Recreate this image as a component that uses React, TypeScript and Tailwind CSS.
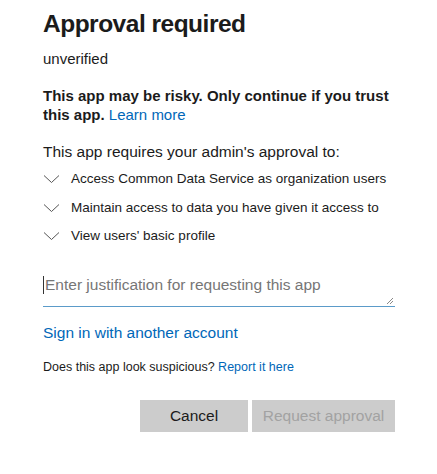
import React from "react";

const Chevron = () => (
  <svg width="17" height="10" viewBox="0 0 17 10" className="shrink-0">
    <path d="M1 1.5 L8.5 8.5 L16 1.5" fill="none" stroke="#555" strokeWidth="1" />
  </svg>
);

const permissions = [
  "Access Common Data Service as organization users",
  "Maintain access to data you have given it access to",
  "View users' basic profile",
];

const App = () => {
  return (
    <div
      className="w-[437px] h-[474px] bg-white text-[#1b1b1b] pl-[43px] pr-[42px] pt-[8px]"
      style={{ fontFamily: '"Liberation Sans", Arial, sans-serif' }}
    >
      <h1 className="text-[24.5px] font-bold leading-[32px] tracking-[-0.5px]">
        Approval required
      </h1>
      <p className="text-[15px] leading-[20px] mt-[9px]">unverified</p>

      <p className="text-[15px] font-bold leading-[19px] mt-[17px]">
        This app may be risky. Only continue if you trust this app.{" "}
        <a href="#" className="text-[#0067b8] font-normal">
          Learn more
        </a>
      </p>

      <p className="text-[15.5px] leading-[20px] mt-[18px]">
        This app requires your admin's approval to:
      </p>

      <ul className="mt-[3px] flex flex-col">
        {permissions.map((p) => (
          <li key={p} className="flex items-center h-[28.5px] text-[13.5px]">
            <Chevron />
            <span className="ml-[11px]">{p}</span>
          </li>
        ))}
      </ul>

      <div className="relative mt-[19px] border-b border-[#5b9bc9] h-[37px]">
        <div className="flex items-center text-[15.5px] text-[#767676] leading-[22px] pt-[4px]">
          <span className="w-px h-[18px] bg-[#333] mr-[1px]" />
          Enter justification for requesting this app
        </div>
        <svg
          width="8"
          height="8"
          viewBox="0 0 8 8"
          className="absolute right-[1px] bottom-[1px]"
        >
          <path d="M7 1 L1 7 M7 4 L4 7" stroke="#888" strokeWidth="1" />
        </svg>
      </div>

      <a href="#" className="block text-[#0067b8] text-[15.5px] leading-[20px] mt-[16px]">
        Sign in with another account
      </a>

      <p className="text-[12.5px] leading-[16px] mt-[16px]">
        Does this app look suspicious?{" "}
        <a href="#" className="text-[#0067b8]">
          Report it here
        </a>
      </p>

      <div className="flex justify-end gap-[4px] mt-[25px]">
        <button className="w-[108px] h-[32px] bg-[#cccccc] text-[15.5px] text-[#1b1b1b]">
          Cancel
        </button>
        <button className="w-[143px] h-[32px] bg-[#cccccc] text-[15.5px] text-[#a2a2a2]">
          Request approval
        </button>
      </div>
    </div>
  );
};

export default App;
